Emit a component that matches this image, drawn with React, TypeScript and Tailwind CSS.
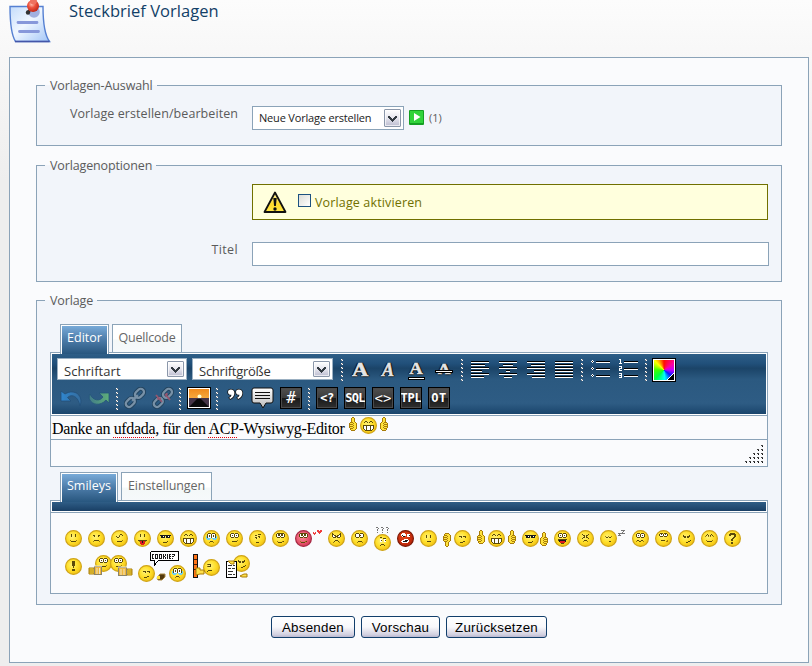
import React from "react";

const COLORS: Record<string, string> = {
  k: "#5b4a0a", w: "#ffffff", r: "#e01c1c", b: "#6fd0f2", y: "#ffe23c", o: "#a87c08",
  d: "#1a1a1a", g: "#777777", R: "#f03e3e", t: "#9a7d10",
};

/* Draws a small bitmap, one character for each pixel. */
function Pix({ x = 0, y = 0, rows }: { x?: number; y?: number; rows: string[] }) {
  return (
    <g shapeRendering="crispEdges">
      {rows.flatMap((row, j) =>
        row.split("").map((c, i) =>
          COLORS[c] ? <rect key={i + "-" + j} x={x + i} y={y + j} width={1} height={1} fill={COLORS[c]} /> : null
        )
      )}
    </g>
  );
}

const F: Record<string, string[]> = {
  smile: ["", "..k...k..", "..k...k..", "..k...k..", "", "", "", ".t.....t.", "..kkkkk.."],
  sad: ["", "", ".kk...kk.", "..k...k..", "", "", "", "..kkkkk..", ".t.....t."],
  wink: ["", ".....kk..", "....t..k.", ".k..k....", "..kk.....", "", "", ".......t.", "..kkkkk.."],
  tongue: ["", "..k...k..", "..k...k..", "..k...k..", "", "", "", "kkkkkkkkk", ".trrdrrt.", "..rrdrr..", "..rrrrr..", "...rrr..."],
  cool: ["", "", "ddddddddddd", ".ddwd.ddwd.", ".dddd.dddd.", "", "", "", ".......k...", "...kkkk...."],
  grin: ["", "..kk...kk..", ".k..k.k..k.", "", "", "kkkkkkkkkkk", "kwwkwwwkwwk", "kwwkwwwkwwk", "kwwkwwwkwwk", ".kwkwwwkwk.", "..kkkkkkk.."],
  cry: ["..kkk.kkk..", ".kwwwkwwwk.", ".kwkwkwkwk.", "bkwkwkwkwkb", "bkwwwkwwwkb", "bbbbb.bbbbb", ".bbb...bbb.", "...........", "....kkk....", "...t...t..."],
  eyes: [".kkk.kkk.", "kwwwkwwwk", "kwkwkwkwk", "kwwwkwwwk", ".kkk.kkk.", "", "", ".......t.", "..kkkkk.."],
  doubt: ["", ".....kkk.", "..kk.....", ".....kk..", "..kk..k..", "...k.....", "", "", "", "...kkk..."],
  roll: [".kkkkkkk.", "kwkkwkkwk", "kwkkwkkwk", "kwwwkwwwk", ".kkk.kkk.", "", "", "", ".t....tk.", "..kkkk..."],
  angry: ["k.......k", "kk.....kk", "kwkk.kkwk", "kwwkkkwwk", ".kkk.kkk.", "", "", "...kkk...", "..k...k..", ".t.....t."],
  stare: [".kkk.kkk.", "kwwwkwwwk", "kwwwkkwwk", "kwwwkwwwk", ".kkk.kkk.", "", "", "", "...kkkk..", "..t....t."],
  ask: ["..kk.....", ".....kkk.", "..ww..ww.", "..wk..wk.", "..ww..ww.", "", "", "...kkk...", "..k...k.."],
  rage: [".www.....", "wwwww.www", "wdwww.wwd", ".wdd..www", ".........", "", "...wwww..", ".wwwdddw.", "wwddddww.", ".wwwwww.."],
  blank: ["", "", "..k...k..", "..k...k..", "..k...k..", "", "", "", "...kkkk.."],
  down: ["", "", "", ".kkk.kkk.", "...k...k.", "", "", "", ".....kk..", "..kkk...."],
  happy: ["..kkk.kkk..", ".kwwwkwwwk.", ".kwkwkwkwk.", ".kwwwkwwwk.", "..kkk.kkk..", "", ".kkkkkkkkk.", ".kddddddd..", "..drrrrrd..", "...rrrrr...", "....kkk...."],
  squint: ["", ".k.....k.", "..kk.kk..", "...k.k...", "..kk.kk..", ".k.....k.", "", "...kkk...", "..t...t.."],
  sleep: ["", "", "", ".t..t..t.", "..kk.kk..", "", "", "", ".....kk.."],
  worry: [".kkk.kkk.", "kwwwkwwwk", "kwkwkwkwk", "kwwwkwwwk", ".kkk.kkk.", "", "", ".kk..kk..", "t..kk..t."],
  shy: [".kkk.kkk.", "kwkwkwkwk", "kwwwkwwwk", ".kkk.kkk.", "", "", "", "..kkkk..o", ".......oo"],
  evil: ["", "", ".k.....k.", ".kkk.kkk.", "..kk.kk..", "", "", "........k", "......kk.", "....kk..."],
  joy: ["", "..k...k..", ".k.k.k.k.", "t..t.t..t", "", "", "", ".t.....t.", "..kkkkk.."],
  question: ["..kkkkk..", ".kkkkkkk.", ".kk...kk.", "......kk.", ".....kk..", "....kk...", "...kk....", "...kk....", "", "...kk....", "...kk...."],
  bang: ["...kkk...", "...kkk...", "...kkk...", "...kkk...", "...kkk...", "....k....", "....k....", "", "...kkk...", "...kkk..."],
  gasp: ["", "", "tkkk.....", "...k.....", "tkkk.....", "", "", "", ".kkkk....", "k........"],
};

function Face({ x = 0, y = 0, f, tone = "yellow" }: { x?: number; y?: number; f: string; tone?: "yellow" | "pink" | "red" }) {
  const edge = tone === "yellow" ? "#cfa41a" : tone === "pink" ? "#a62a45" : "#7c1a08";
  const wide = F[f].some((row) => row.length === 11);
  return (
    <g transform={`translate(${x} ${y})`}>
      <circle cx="8.5" cy="8.5" r="7.9" fill={`url(#face-${tone})`} stroke={edge} strokeWidth="1.2" />
      <Pix x={wide ? 3 : 4} y={3} rows={F[f]} />
    </g>
  );
}

function Thumb({ x, y = 0, flip = false, down = false }: { x: number; y?: number; flip?: boolean; down?: boolean }) {
  return (
    <g transform={`translate(${x + (flip ? 8 : 0)} ${y + (down ? 14 : 0)}) scale(${flip ? -1 : 1} ${down ? -1 : 1})`}>
      <Pix rows={["...oo...", "..oyyo..", "..oyyo..", "..oyyo..", "..oyyo..", ".oyyooo.", "oyyoyyyo", "oyyyoooo", "oyyoyyyo", "oyyyoooo", "oyyoyyyo", "oyyyooo.", ".oyyyyo.", "..oooo.."]} />
    </g>
  );
}

function Canvas({ w, h = 17, className = "", children }: { w: number; h?: number; className?: string; children: React.ReactNode }) {
  return <svg width={w} height={h} viewBox={`0 0 ${w} ${h}`} className={"block shrink-0 overflow-visible " + className}>{children}</svg>;
}

function Defs() {
  return (
    <svg width="0" height="0" className="absolute">
      <defs>
        <radialGradient id="face-yellow" cx="0.42" cy="0.4" r="0.6"><stop offset="0" stopColor="#fff27a" /><stop offset="0.55" stopColor="#ffe02c" /><stop offset="1" stopColor="#f3c414" /></radialGradient>
        <radialGradient id="face-pink" cx="0.42" cy="0.4" r="0.6"><stop offset="0" stopColor="#ff8a96" /><stop offset="1" stopColor="#d83a58" /></radialGradient>
        <radialGradient id="face-red" cx="0.42" cy="0.4" r="0.6"><stop offset="0" stopColor="#e8481c" /><stop offset="1" stopColor="#b82408" /></radialGradient>
        <linearGradient id="silver" x1="0" y1="0" x2="0" y2="1"><stop offset="0" stopColor="#ffffff" /><stop offset="1" stopColor="#b9b9b9" /></linearGradient>
        <linearGradient id="paper" x1="0" y1="0" x2="1" y2="1"><stop offset="0" stopColor="#c4dcfb" /><stop offset="0.45" stopColor="#f0f7ff" /><stop offset="1" stopColor="#a3c6f7" /></linearGradient>
        <radialGradient id="pin" cx="0.4" cy="0.35" r="0.65"><stop offset="0" stopColor="#ffc4b4" /><stop offset="0.45" stopColor="#ee5540" /><stop offset="1" stopColor="#c22818" /></radialGradient>
        <linearGradient id="warn" x1="0" y1="0" x2="0" y2="1"><stop offset="0" stopColor="#fff6b0" /><stop offset="0.6" stopColor="#ffd92a" /><stop offset="1" stopColor="#ffe84a" /></linearGradient>
        <linearGradient id="sky" x1="0" y1="0" x2="0" y2="1"><stop offset="0" stopColor="#f08a1c" /><stop offset="1" stopColor="#ffc860" /></linearGradient>
        <linearGradient id="undo" x1="0" y1="0" x2="1" y2="0"><stop offset="0" stopColor="#2f86cf" /><stop offset="1" stopColor="#356c9c" /></linearGradient>
        <linearGradient id="redo" x1="0" y1="0" x2="1" y2="0"><stop offset="0" stopColor="#417c88" /><stop offset="1" stopColor="#5fae79" /></linearGradient>
      </defs>
    </svg>
  );
}

function NoteIcon() {
  return (
    <svg width="44" height="44" viewBox="0 0 44 44" className="block">
      <path d="M1 6.5H34C34 20 35 34 40.5 41.5H6.5C3 36 1 22 1 6.5Z" fill="url(#paper)" stroke="#5580d2" strokeWidth="1.4" />
      <path d="M6 41.5H40.5" stroke="#4456a8" strokeWidth="1.6" />
      <circle cx="25" cy="12" r="5.8" fill="#a1b0e0" />
      <path d="M9 22.5H28M10.5 31.5H29.5" stroke="#8798da" strokeWidth="2.8" strokeLinecap="round" />
      <circle cx="19" cy="12.5" r="2.2" fill="#333" /><path d="M19 12L23 8" stroke="#333" strokeWidth="2.5" />
      <circle cx="24" cy="6" r="6" fill="url(#pin)" /><circle cx="24.5" cy="1" r="3.4" fill="#ee7260" />
    </svg>
  );
}

function Arrow({ className = "" }: { className?: string }) {
  return (
    <span className={"flex shrink-0 items-center justify-center rounded-[1px] border border-[#8b97aa] bg-gradient-to-b from-white via-[#e6e6ee] to-[#bdbdd0] shadow-[inset_0_0_0_1px_#ffffffaa] " + className}>
      <svg width="9" height="7" viewBox="0 0 9 7" shapeRendering="crispEdges"><path d="M0 1h2v1h1v1h1v1h1V3h1V2h1V1h2v2H8v1H7v1H6v1H5v1H4V6H3V5H2V4H1V3H0z" fill="#333b42" /></svg>
    </span>
  );
}

function Legend({ children }: { children: React.ReactNode }) {
  return <legend className="h-[19px] whitespace-nowrap pl-[5px] pr-[4px] leading-[19px] tracking-[-0.13px]">{children}</legend>;
}

function Tab({ active = false, className, children }: { active?: boolean; className: string; children: React.ReactNode }) {
  return active ? (
    <div className={"relative z-10 -mb-[2px] h-[30px] border border-b-0 border-[#8ba3b8] bg-white px-px pt-px text-white " + className}>
      <div className="flex h-full justify-center bg-gradient-to-b from-[#78aad8] via-[#4c7ba8] via-50% to-[#28577f] pt-[3px] leading-[17px]">{children}</div>
    </div>
  ) : (
    <div className={"flex h-[28px] justify-center whitespace-nowrap border border-b-0 border-[#8ba3b8] bg-[linear-gradient(#ffffff_50%,#f4f8f8_58%,#f6f9fb)] pt-[4px] leading-[17px] text-[#666] " + className}>{children}</div>
  );
}

function Dots({ className }: { className: string }) {
  return (
    <svg width="2" height="22" viewBox="0 0 2 22" shapeRendering="crispEdges" className={"shrink-0 " + className}>
      {[0, 4, 8, 12, 16, 20].map((y) => <g key={y}><rect y={y} x="0" width="2" height="2" fill="#777b80" /><rect y={y} x="0" width="1" height="1" fill="#fff" /><rect y={y + 1} x="1" width="1" height="1" fill="#fff" /></g>)}
    </svg>
  );
}

function Lines({ spans }: { spans: number[][] }) {
  return (
    <svg width="18" height="22" viewBox="0 0 18 22" shapeRendering="crispEdges" className="mr-[10px] mt-px shrink-0">
      {spans.map(([x, w], i) => <g key={i}><rect x={x} y={2 + i * 3} width={w} height="1" fill="#000" /><rect x={x} y={3 + i * 3} width={w} height="1" fill="#fff" /></g>)}
    </svg>
  );
}

function Letter({ kind }: { kind: "b" | "i" | "u" | "s" }) {
  const base = "absolute inset-x-0 text-center font-['Liberation_Serif',serif] font-bold text-[#e4e4e4] [-webkit-text-stroke:0.5px_#e4e4e4] [text-shadow:0_1px_1px_#000,1px_0_1px_#000,-1px_0_1px_#000,0_0_1px_#000] ";
  return (
    <span className="relative mr-[6px] block h-[22px] w-[22px] shrink-0">
      <span className={base + (kind === "i" ? "top-0 text-[18px] italic leading-[24px]" : kind === "s" ? "top-px scale-x-125 text-[14px] leading-[22px]" : kind === "u" ? "top-[-1px] scale-x-110 text-[17px] leading-[23px]" : "top-px scale-x-125 text-[18px] leading-[23px]")}>A</span>
      {kind === "u" && <span className="absolute bottom-0 left-[3px] h-[3px] w-[17px] border border-black bg-white" />}
      {kind === "s" && <span className="absolute left-[2px] top-[12px] h-[3px] w-[18px] border border-black bg-white" />}
    </span>
  );
}

function Tile({ children, className = "" }: { children: React.ReactNode; className?: string }) {
  return (
    <span className={"mr-[6px] flex h-[22px] w-[22px] shrink-0 items-center justify-center overflow-hidden whitespace-nowrap border border-black bg-[linear-gradient(#505050,#3b3b3b_48%,#191919_52%,#303030)] font-['DejaVu_Sans_Mono',monospace] leading-none text-white shadow-[inset_0_0_0_1px_#4a4a4a] " + className}>{children}</span>
  );
}

function Toolbar() {
  return (
    <div className="h-[60px] bg-[linear-gradient(#2e5e87,#21507a_16%,#1b4468_24%,#2b5980_42%,#2e5c84_82%,#1a456c)] px-[5px] pt-[4px] text-[13px]">
      <div className="flex h-[28px] items-start">
        <div className="mr-[5px] flex h-[22px] w-[130px] items-start justify-between border border-[#9bb0c2] bg-white pl-[6px] pr-[2px] pt-[2px] text-[#333]">
          <span className="leading-[20px] tracking-[0.05px]">Schriftart</span><Arrow className="h-[16px] w-[17px]" />
        </div>
        <div className="flex h-[22px] w-[141px] items-start justify-between border border-[#9bb0c2] bg-white pl-[6px] pr-[2px] pt-[2px] text-[#333]">
          <span className="leading-[20px] tracking-[-0.25px]">Schriftgröße</span><Arrow className="h-[16px] w-[17px]" />
        </div>
        <Dots className="ml-[8px] mr-[6px] mt-px" />
        <Letter kind="b" /><Letter kind="i" /><Letter kind="u" /><Letter kind="s" />
        <Dots className="mr-[8px] mt-px" />
        <Lines spans={[[0, 18], [0, 14], [0, 18], [0, 11], [0, 18], [0, 13]]} />
        <Lines spans={[[0, 18], [4, 10], [0, 18], [7, 4], [0, 18], [5, 8]]} />
        <Lines spans={[[0, 18], [4, 14], [0, 18], [7, 11], [0, 18], [5, 13]]} />
        <Lines spans={[[0, 18], [0, 18], [0, 18], [0, 18], [0, 18], [0, 18]]} />
        <Dots className="-ml-[2px] mr-[8px] mt-px" />
        <svg width="20" height="22" viewBox="0 0 20 22" shapeRendering="crispEdges" className="mr-[8px] mt-px shrink-0">
          {[2, 9, 16].map((y) => <g key={y}><path d={`M0 ${y}h1v-1h1v1h1v1h-1v1h-1v-1h-1z`} fill="#fff" /><rect x="1" y={y} width="1" height="1" fill="#222" /><rect x="5" y={y} width="14" height="1" fill="#000" /><rect x="5" y={y + 1} width="14" height="1" fill="#fff" /></g>)}
        </svg>
        <svg width="21" height="22" viewBox="0 0 21 22" shapeRendering="crispEdges" className="mr-[5px] mt-px shrink-0">
          <path d="M1 0h1v4h1v1H0V4h1V1H0V0zM0 7h3v3H1v1h2v1H0V9h2V8H0zM0 14h3v5H0v-1h2v-1H0v-1h2v-1H0z" fill="#fff" />
          {[2, 9, 16].map((y) => <g key={y}><rect x="5" y={y} width="14" height="1" fill="#000" /><rect x="5" y={y + 1} width="14" height="1" fill="#fff" /></g>)}
        </svg>
        <Dots className="mr-[5px] mt-px" />
        <span className="relative block h-[24px] w-[24px] shrink-0 border border-black bg-white p-px">
          <span className="block h-full w-full bg-[conic-gradient(from_0deg,#ff1000,#ff00a0_55deg,#c000ff_90deg,#0020ff_130deg,#00ffff_175deg,#00ff40_225deg,#40ff00_270deg,#ffff00_315deg,#ff1000)]" />
          <svg width="7" height="7" viewBox="0 0 7 7" className="absolute bottom-px right-px" shapeRendering="crispEdges"><path d="M7 0V7H0Z" fill="#000" /><path d="M7 0L0 7" stroke="#fff" /></svg>
        </span>
      </div>
      <div className="flex h-[24px] items-start pt-px">
        <svg width="24" height="22" viewBox="0 0 24 22" className="ml-[2px] mr-[4px] shrink-0"><path d="M2 4V14H12L8.5 10.5C13 6.5 19 9 21 19C25 9 16 1 6 7Z" fill="url(#undo)" stroke="#234f78" strokeWidth="0.8" /></svg>
        <svg width="24" height="22" viewBox="0 0 24 22" className="mr-[5px] shrink-0"><path d="M22 6H12L16 10C13 14.5 6 14 3 7C-1 15 11 22 19 13L22 16Z" fill="url(#redo)" stroke="#24567a" strokeWidth="0.8" /></svg>
        <Dots className="mr-[6px] mt-px" />
        {[false, true].map((broken) => (
          <svg key={String(broken)} width="22" height="22" viewBox="0 0 22 22" className={"shrink-0 " + (broken ? "mr-[5px]" : "mr-[6px]")} fill="none">
            {[["#23445f", 4.2], ["#7891a7", 2.3]].map(([color, width]) => (
              <g key={color} transform="rotate(-45 11 11)" stroke={String(color)} strokeWidth={width}>
                <rect x="-0.5" y="7.6" width="10" height="6.5" rx="3.2" /><rect x="12.5" y="7.6" width="10" height="6.5" rx="3.2" />
                {!broken && <path d="M7 11H15" />}
              </g>
            ))}
            {broken && <path d="M4 8L10 15M13 7L18 13M5 12L9 11M15 6L14 10" stroke="#94566f" strokeWidth="1.8" />}
          </svg>
        ))}
        <Dots className="mr-[6px] mt-px" />
        <svg width="24" height="22" viewBox="0 0 24 22" className="mr-[5px] shrink-0">
          <rect width="24" height="22" fill="#000" /><rect x="1" y="1" width="22" height="20" fill="#fff" /><rect x="2" y="2" width="20" height="18" fill="url(#sky)" />
          <circle cx="12.5" cy="9.5" r="2" fill="#ffffd0" /><path d="M2 11H22V20H2Z" fill="#453447" /><path d="M2 20L10 12H14L22 20Z" fill="#0b0a0c" />
        </svg>
        <Dots className="mr-[9px] mt-px" />
        <svg width="18" height="22" viewBox="0 0 18 22" className="mr-[6px] shrink-0">
          {[0, 8].map((x) => <path key={x} d={`M${x + 1} 5c0-3.4 6.4-3.4 6.4 1c0 3-2 5-4.2 6l-1-1.2c2-1 2.2-2 2.2-3c-2 0-3.4-.8-3.4-2.8z`} fill="#fff" stroke="#111" strokeWidth="1.4" paintOrder="stroke" />)}
        </svg>
        <svg width="24" height="22" viewBox="0 0 24 22" className="mr-[5px] shrink-0"><path d="M3 1H20Q22 1 22 3V14Q22 16 20 16H15L12 21L9 16H3Q1 16 1 14V3Q1 1 3 1Z" fill="url(#silver)" stroke="#111" /><path d="M4 5.5H19M4 8.5H19M4 11.5H19" stroke="#111" strokeWidth="1.2" /></svg>
        <Tile className="text-[16px]">#</Tile>
        <Dots className="mr-[6px] mt-px" />
        <Tile className="text-[12px] font-bold tracking-[-0.4px]">&lt;?</Tile>
        <Tile className="text-[12px] font-bold tracking-[-0.8px]">SQL</Tile>
        <Tile className="text-[14px]">&lt;&gt;</Tile>
        <Tile className="text-[12px] font-bold tracking-[-0.2px]">TPL</Tile>
        <Tile className="text-[12px] font-bold tracking-[0.6px]">OT</Tile>
      </div>
    </div>
  );
}

function Smileys() {
  return (
    <div className="pl-[14px] pt-[13px]">
      <div className="mt-[4px] flex h-[25px] items-start">
        <Canvas w={230}>{["smile", "sad", "wink", "tongue", "cool", "grin", "cry", "eyes", "doubt", "roll"].map((f, i) => <Face key={f} x={i * 23} f={f} />)}</Canvas>
        <Canvas w={33}><Face f="roll" tone="pink" /><Pix x={18} y={0} rows={["....RR.RR", "....RRRRR", "R.R..RRR.", "RRR...R..", ".R......."]} /></Canvas>
        <Canvas w={46}><Face f="angry" /><Face x={23} f="stare" /></Canvas>
        <Canvas w={23}><Face y={4} f="ask" /><Pix x={2} y={-3} rows={["gg...gg...gg.", "..g....g....g", ".g....g....g.", ".g....g....g.", ".............", ".g....g....g."]} /></Canvas>
        <Canvas w={46}><Face f="rage" tone="red" /><Face x={23} f="blank" /></Canvas>
        <Canvas w={34}><Thumb x={0} y={3} flip down /><Face x={11} f="down" /></Canvas>
        <Canvas w={45}><Thumb x={0} flip /><Face x={11} f="grin" /><Thumb x={31} /></Canvas>
        <Canvas w={32}><Face f="cool" /><Thumb x={18} y={2} /></Canvas>
        <Canvas w={46}><Face f="happy" /><Face x={23} f="squint" /></Canvas>
        <Canvas w={32}><Face f="sleep" /><Pix x={18} y={0} rows={["...gggg", ".....g.", "....g..", "ggggggg", ".g.....", "ggg...."]} /></Canvas>
        <Canvas w={115}>{["worry", "shy", "evil", "joy", "question"].map((f, i) => <Face key={f} x={i * 23} f={f} />)}</Canvas>
      </div>
      <div className="mt-[-5px] flex items-start">
        <Canvas w={23} className="mt-[8px]"><Face f="bang" /></Canvas>
        <Canvas w={50} h={32}>
          <Face x={7} y={5} f="eyes" /><Face x={22} y={5} f="eyes" />
          <path d="M1 18h5v6H1zM39 19h5v6h-5z" fill="#ffe04a" stroke="#a87c08" />
          <g fill="#f1b73c" stroke="#8c8468" shapeRendering="crispEdges"><rect x="6.5" y="16.5" width="7" height="8" /><rect x="30.5" y="17.5" width="8" height="8" /></g>
          <path d="M6 16h8M30 17h9M9 18v6M11.5 18v6M33 19v6M36 19v6" stroke="#eee8cd" />
          <path d="M1 20h4M1 22h4M40 21h4M40 23h4" stroke="#a87c08" />
        </Canvas>
        <Canvas w={54} h={32}>
          <path d="M13.5 1.5h27v9H20.5L16.5 15v-4.5h-4v-8z" fill="#fff" stroke="#000" shapeRendering="crispEdges" />
          <Pix x={14} y={4} rows={["dd.ddd.ddd.d.d.d.dd.ddd", "d..d.d.d.d.d.d.d.d....d", "d..d.d.d.d.dd..d.dd.dd.", "d..d.d.d.d.d.d.d.d.....", "dd.ddd.ddd.d.d.d.dd.d.."]} />
          <Face y={15} f="down" /><Face x={31} y={15} f="cry" />
          <path d="M19 28L22 24H27V27L24 30H20Z" fill="#51380d" stroke="#a88640" /><rect x="19" y="26" width="3" height="3" fill="#ffe03a" />
        </Canvas>
        <Canvas w={34} h={32}>
          <Face x={11} y={9} f="gasp" />
          <path d="M1.5 4.5h4v23h-4z" fill="#ff7418" stroke="#111" shapeRendering="crispEdges" /><path d="M2 9.5h3M2 14.5h3M2 19.5h3" stroke="#4a2109" />
          <path d="M4 18h4v2h4v4H8l-4 1z" fill="#ffe04a" stroke="#a87c08" />
        </Canvas>
        <Canvas w={26} h={32}>
          <Face x={7} y={5} f="evil" /><rect x=".5" y="11.5" width="10" height="16" fill="#fff" stroke="#000" shapeRendering="crispEdges" />
          <path d="M2 15.5h4m1 0h2M2 18.5h3m1 0h3M2 21.5h5M2 24.5h4m1 0h2" stroke="#333" shapeRendering="crispEdges" />
          <path d="M2 11h6v3H5zM14 26l4-2h3v3h-5z" fill="#ffe04a" stroke="#a87c08" />
        </Canvas>
      </div>
    </div>
  );
}

function Button({ className, children }: { className: string; children: React.ReactNode }) {
  return <button className={"h-[22px] whitespace-nowrap rounded-[3px] border border-[#123f6c] bg-[linear-gradient(#ffffff,#f8f8fb_50%,#d2d0e0_88%,#bab7cf)] text-center font-['Liberation_Sans',Arial,sans-serif] text-[13.33px] leading-[21px] tracking-[0.25px] text-black " + className}>{children}</button>;
}

function Misspelt({ children }: { children: React.ReactNode }) {
  return <span className="underline decoration-red-600 decoration-dotted decoration-[1px] underline-offset-[3px] [text-decoration-skip-ink:none]">{children}</span>;
}

export default function App() {
  return (
    <div className="h-[666px] w-[812px] overflow-hidden bg-[linear-gradient(#fcfcfc,#f7f7f7_60px,#eeeeee_180px)] font-['Open_Sans','Trebuchet_MS',sans-serif] text-[12.5px] text-[#5b5b5b]">
      <Defs />
      <header className="flex h-[57px] pl-[9px]">
        <NoteIcon />
        <h1 className="ml-[16px] text-[16.5px] leading-[22px] tracking-[0.03px] text-[#123f67]">Steckbrief Vorlagen</h1>
      </header>
      <main className="ml-[9px] h-[606px] w-[800px] border border-[#8ba3b8] bg-[#fafbfd] pl-[26px] pt-[18px]">
        <fieldset className="h-[70px] w-[746px] border border-[#8ba3b8] bg-[#f2f5fa] pl-[8px]">
          <Legend>Vorlagen-Auswahl</Legend>
          <div className="flex pt-[11px]">
            <label className="mr-[14px] w-[193px] whitespace-nowrap text-right leading-[16px] tracking-[0.07px]">Vorlage erstellen/bearbeiten</label>
            <div className="flex h-[24px] w-[152px] items-center justify-between border border-[#8ba3b8] bg-white pl-[6px] pr-[2px] text-[11px] tracking-[-0.18px] text-[#222]"><span>Neue Vorlage erstellen</span><Arrow className="h-[18px] w-[17px]" /></div>
            <svg width="15" height="15" viewBox="0 0 15 15" className="ml-[5px] mt-[4px]"><rect width="15" height="15" rx="1" fill="#159f22" /><rect x="1" y="1" width="13" height="12" fill="#31d33a" /><path d="M5 3L11.5 7L5 11Z" fill="#fff" /></svg>
            <span className="ml-[5px] text-[11px] leading-[24px]">(1)</span>
          </div>
        </fieldset>
        <fieldset className="mt-[10px] h-[126px] w-[746px] border border-[#8ba3b8] bg-[#f2f5fa] pl-[8px]">
          <Legend>Vorlagenoptionen</Legend>
          <div className="ml-[207px] mt-[9px] flex h-[36px] w-[516px] items-start border border-[#707000] bg-[#ffffdd] pl-[10px] text-[#707000]">
            <svg width="24" height="23" viewBox="0 0 24 23" className="mt-[6px]"><path d="M12 1.5L22.5 21H1.5Z" fill="url(#warn)" stroke="#111" strokeWidth="1.8" strokeLinejoin="round" /><path d="M10.3 7h3.4l-.8 8h-1.8z" fill="#111" /><circle cx="12" cy="18" r="1.7" fill="#111" /></svg>
            <span className="ml-[11px] mt-[9px] h-[13px] w-[13px] border border-[#1c5180] bg-gradient-to-br from-[#dcdcd7] to-white" />
            <span className="ml-[4px] leading-[36px] tracking-[0.14px]">Vorlage aktivieren</span>
          </div>
          <div className="mt-[22px] flex"><label className="mr-[14px] w-[193px] text-right leading-[16px] tracking-[0.35px]">Titel</label><div className="h-[24px] w-[517px] border border-[#8ba3b8] bg-white" /></div>
        </fieldset>
        <fieldset className="mt-[9px] h-[314px] w-[746px] border border-[#8ba3b8] bg-[#f2f5fa] pl-[8px]">
          <Legend>Vorlage</Legend>
          <div className="ml-[5px] w-[718px] pt-[14px]">
            <div className="flex h-[28px] gap-[3px] pl-[10px]"><Tab active className="w-[49px]">Editor</Tab><Tab className="w-[70px] tracking-[-0.2px]">Quellcode</Tab></div>
            <div className="h-[115px] border border-[#8ba3b8] bg-[#fafbfd]">
              <div className="border-b border-[#8ba3b8] bg-white p-px"><Toolbar /></div>
              <div className="flex h-[24px] items-start border-b border-[#8ba3b8] pl-px font-['Liberation_Serif',serif] text-[16px] leading-[26px] text-black">
                <span className="whitespace-nowrap tracking-[-0.35px]">Danke an <Misspelt>ufdada</Misspelt>, für den <Misspelt>ACP</Misspelt>-Wysiwyg-Editor</span>
                <Canvas w={42} className="ml-[5px] mt-[1px]"><Thumb x={0} flip /><Face x={11} f="grin" /><Thumb x={31} /></Canvas>
              </div>
              <div className="flex justify-end pr-[2px] pt-[4px]"><svg width="20" height="20" viewBox="0 0 20 20" shapeRendering="crispEdges">{[0, 1, 2, 3, 4].map((r) => Array.from({ length: r + 1 }, (_, c) => <g key={r + "-" + c}><rect x={16 - c * 4} y={1 + r * 4} width="2" height="1" fill="#444" /><rect x={17 - c * 4} y={2 + r * 4} width="1" height="1" fill="#111" /></g>))}</svg></div>
            </div>
            <div className="mt-[5px] flex h-[28px] gap-[3px] pl-[10px]"><Tab active className="w-[58px]">Smileys</Tab><Tab className="w-[91px] tracking-[-0.1px]">Einstellungen</Tab></div>
            <div className="h-[94px] border border-[#8ba3b8] bg-[#fafbfd]">
              <div className="border-b border-[#8ba3b8] bg-white p-px"><div className="h-[9px] bg-gradient-to-b from-[#2f5d86] to-[#193f65]" /></div>
              <Smileys />
            </div>
          </div>
        </fieldset>
        <div className="flex gap-[6px] pl-[235px] pt-[11px]"><Button className="w-[84px]">Absenden</Button><Button className="w-[79px]">Vorschau</Button><Button className="w-[101px]">Zurücksetzen</Button></div>
      </main>
    </div>
  );
}
